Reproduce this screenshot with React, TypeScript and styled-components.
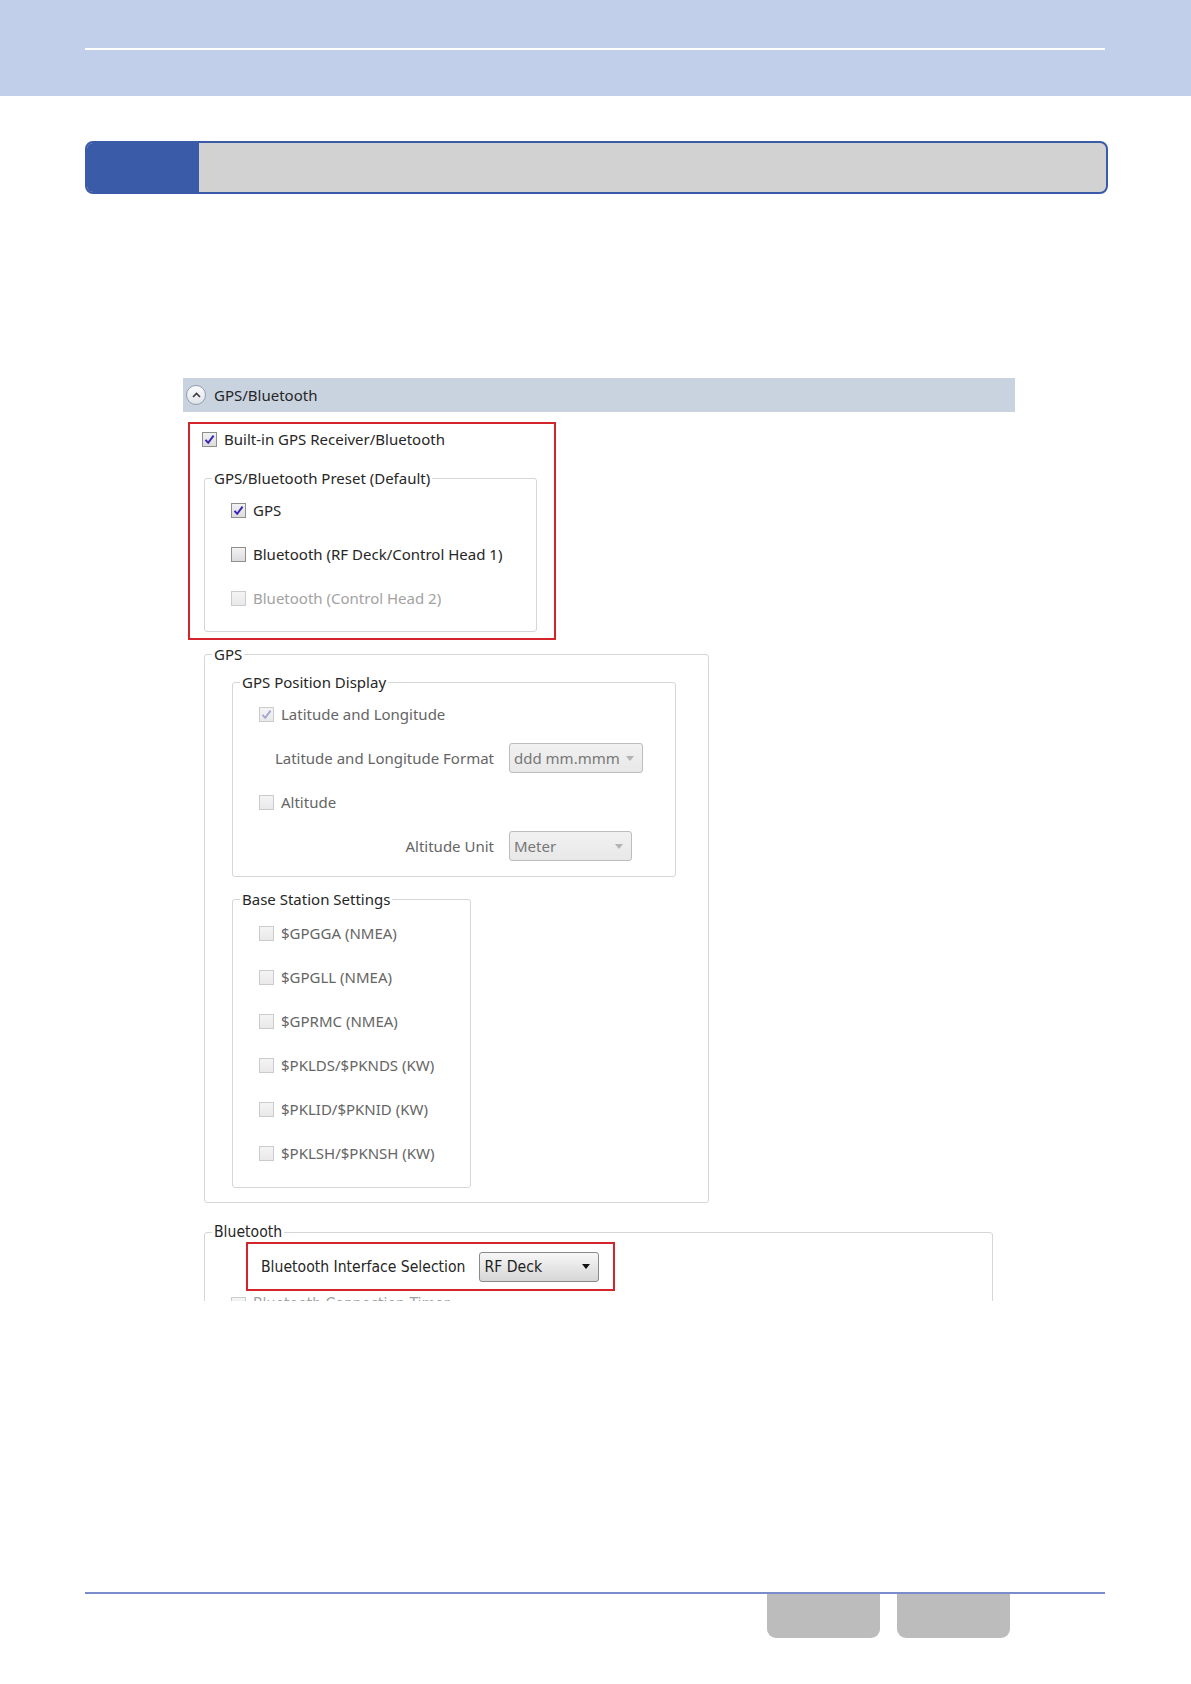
import styled, { createGlobalStyle } from "styled-components";

const GlobalStyle = createGlobalStyle`
  html, body { margin: 0; padding: 0; background: #ffffff; }
  * { box-sizing: border-box; }
`;

const Page = styled.div`
  width: 1191px;
  height: 1684px;
  display: flex;
  flex-direction: column;
  background: #fff;
  font-family: "Noto Sans", "Open Sans", sans-serif;
`;

const Header = styled.header`
  height: 96px;
  background: #c2cfeb;
  padding: 48px 86px 0 85px;
`;

const HeaderRule = styled.div`
  height: 2px;
  background: #ffffff;
`;

const TitleBar = styled.div`
  margin: 45px 0 0 85px;
  width: 1023px;
  height: 53px;
  display: flex;
  border: 2px solid #3a5ba8;
  border-radius: 8px;
  overflow: hidden;
  background: #d2d2d2;
`;

const TitleBlock = styled.div`
  width: 112px;
  background: #3a5ba8;
`;

const Shot = styled.section`
  margin: 184px 0 0 183px;
  width: 832px;
  height: 923px;
  overflow: hidden;
  color: #262626;
  font-size: 15px;
`;

const SectionHead = styled.div`
  height: 34px;
  display: flex;
  align-items: center;
  gap: 8px;
  padding-left: 3px;
  background: #c9d3e0;
`;

const CollapseIcon = styled.span`
  width: 20px;
  height: 20px;
  border-radius: 50%;
  border: 1px solid #939dab;
  background: linear-gradient(#fbfcfd, #dfe4ea);
  display: flex;
  align-items: center;
  justify-content: center;
`;

const HighlightBox = styled.div<{ $w: number; $h?: number }>`
  width: ${(p) => p.$w}px;
  ${(p) => (p.$h ? `height: ${p.$h}px;` : "")}
  border: 2px solid #d4252c;
`;

const Row = styled.div<{ $h?: number }>`
  height: ${(p) => p.$h ?? 44}px;
  display: flex;
  align-items: center;
  gap: 7px;
`;

const Label = styled.span<{ $tone?: "normal" | "muted" | "disabled" }>`
  white-space: nowrap;
  line-height: 20px;
  color: ${(p) =>
    p.$tone === "disabled" ? "#a2a2a2" : p.$tone === "muted" ? "#656565" : "#262626"};
`;

const FieldLabel = styled(Label)`
  width: 235px;
  text-align: right;
  margin-right: 8px;
`;

const Group = styled.fieldset<{ $w: number }>`
  width: ${(p) => p.$w}px;
  margin: 0;
  padding: 0;
  border: 1px solid #d6d6d6;
  border-radius: 3px;
  min-width: 0;
`;

const GroupBody = styled.div<{ $pad: string }>`
  padding: ${(p) => p.$pad};
`;

const Legend = styled.legend`
  margin-left: 7px;
  padding: 0 2px;
  line-height: 20px;
  color: #262626;
  white-space: nowrap;
`;

const Box = styled.span<{ $disabled?: boolean }>`
  width: 15px;
  height: 15px;
  flex-shrink: 0;
  display: flex;
  align-items: center;
  justify-content: center;
  border: 1px solid ${(p) => (p.$disabled ? "#cbcbcb" : "#8e8e8e")};
  background: ${(p) =>
    p.$disabled ? "linear-gradient(#f4f4f4, #e9e9e9)" : "linear-gradient(#f2f2f2, #dcdcdc)"};
`;

const Select = styled.div<{ $w: number; $active?: boolean }>`
  width: ${(p) => p.$w}px;
  height: 30px;
  display: flex;
  align-items: center;
  justify-content: space-between;
  padding: 0 8px 0 4px;
  border: 1px solid ${(p) => (p.$active ? "#8a8a8a" : "#bdbdbd")};
  border-radius: 3px;
  background: ${(p) =>
    p.$active ? "linear-gradient(#f7f7f7, #d6d6d6)" : "linear-gradient(#f1f1f1, #e8e8e8)"};
  color: ${(p) => (p.$active ? "#1f1f1f" : "#777")};
`;

const Caret = styled.span<{ $active?: boolean }>`
  width: 0;
  height: 0;
  border-left: 4px solid transparent;
  border-right: 4px solid transparent;
  border-top: 5px solid ${(p) => (p.$active ? "#111" : "#b3b3b3")};
`;

const Narrow = styled.div`
  font-family: "Liberation Sans Narrow", "DejaVu Sans Condensed", "Noto Sans", sans-serif;
  font-size: 15.6px;
`;

const SelectionRow = styled(Row)`
  padding-left: 13px;
  gap: 14px;
`;

const Footer = styled.footer`
  margin-top: auto;
  padding: 0 86px 46px 85px;
`;

const FooterRule = styled.div`
  height: 2px;
  background: #7b8bcb;
`;

const Tabs = styled.div`
  display: flex;
  gap: 17px;
  padding-left: 682px;
`;

const Tab = styled.div`
  width: 113px;
  height: 44px;
  background: #bcbcbc;
  border-radius: 0 0 9px 9px;
`;

const Body = styled.div`
  padding: 10px 0 0 5px;
`;

const Indent = styled.div<{ $l: number; $t?: number }>`
  margin-left: ${(p) => p.$l}px;
  margin-top: ${(p) => p.$t ?? 0}px;
`;

function Check({ checked, disabled }: { checked?: boolean; disabled?: boolean }) {
  return (
    <Box $disabled={disabled}>
      {checked && (
        <svg width="11" height="11" viewBox="0 0 11 11">
          <path
            d="M1.5 5.8 L4.2 8.8 L9.6 1.6"
            fill="none"
            stroke={disabled ? "#a6a8d0" : "#3526b8"}
            strokeWidth="2"
          />
        </svg>
      )}
    </Box>
  );
}

function Item({
  text,
  checked,
  tone,
  disabled,
  h,
}: {
  text: string;
  checked?: boolean;
  tone?: "normal" | "muted" | "disabled";
  disabled?: boolean;
  h?: number;
}) {
  return (
    <Row $h={h}>
      <Check checked={checked} disabled={disabled} />
      <Label $tone={tone}>{text}</Label>
    </Row>
  );
}

const baseStations = [
  "$GPGGA (NMEA)",
  "$GPGLL (NMEA)",
  "$GPRMC (NMEA)",
  "$PKLDS/$PKNDS (KW)",
  "$PKLID/$PKNID (KW)",
  "$PKLSH/$PKNSH (KW)",
];

export default function App() {
  return (
    <Page>
      <GlobalStyle />
      <Header>
        <HeaderRule />
      </Header>
      <TitleBar>
        <TitleBlock />
      </TitleBar>

      <Shot>
        <SectionHead>
          <CollapseIcon>
            <svg width="9" height="6" viewBox="0 0 9 6">
              <path d="M1 5 L4.5 1.5 L8 5" fill="none" stroke="#3a3a3a" strokeWidth="1.6" />
            </svg>
          </CollapseIcon>
          <Label>GPS/Bluetooth</Label>
        </SectionHead>

        <Body>
          <HighlightBox $w={368}>
            <Indent $l={12} $t={0}>
              <Item text="Built-in GPS Receiver/Bluetooth" checked h={30} />
            </Indent>
            <Indent $l={14} $t={14}>
              <Group $w={333}>
                <Legend>GPS/Bluetooth Preset (Default)</Legend>
                <GroupBody $pad="0 0 11px 26px">
                  <Item text="GPS" checked />
                  <Item text="Bluetooth (RF Deck/Control Head 1)" />
                  <Item text="Bluetooth (Control Head 2)" tone="disabled" disabled />
                </GroupBody>
              </Group>
            </Indent>
            <Indent $l={0} $t={6} />
          </HighlightBox>

          <Indent $l={16} $t={4}>
            <Group $w={505}>
              <Legend>GPS</Legend>
              <GroupBody $pad="8px 0 14px 27px">
                <Group $w={444}>
                  <Legend>GPS Position Display</Legend>
                  <GroupBody $pad="0 0 8px 26px">
                    <Item text="Latitude and Longitude" checked disabled tone="muted" />
                    <Row>
                      <FieldLabel $tone="muted">Latitude and Longitude Format</FieldLabel>
                      <Select $w={134}>
                        ddd mm.mmm
                        <Caret />
                      </Select>
                    </Row>
                    <Item text="Altitude" disabled tone="muted" />
                    <Row>
                      <FieldLabel $tone="muted">Altitude Unit</FieldLabel>
                      <Select $w={123}>
                        Meter
                        <Caret />
                      </Select>
                    </Row>
                  </GroupBody>
                </Group>
                <Indent $l={0} $t={12}>
                  <Group $w={239}>
                    <Legend>Base Station Settings</Legend>
                    <GroupBody $pad="2px 0 12px 26px">
                      {baseStations.map((s) => (
                        <Item key={s} text={s} disabled tone="muted" />
                      ))}
                    </GroupBody>
                  </Group>
                </Indent>
              </GroupBody>
            </Group>
          </Indent>

          <Indent $l={16} $t={19}>
            <Narrow>
              <Group $w={789}>
                <Legend>Bluetooth</Legend>
                <GroupBody $pad="0 0 0 41px">
                  <HighlightBox $w={369} $h={49}>
                    <SelectionRow $h={45}>
                      <Label>Bluetooth Interface Selection</Label>
                      <Select $w={120} $active>
                        RF Deck
                        <Caret $active />
                      </Select>
                    </SelectionRow>
                  </HighlightBox>
                  <Indent $l={-15} $t={5}>
                    <Item text="Bluetooth Connection Timer" tone="disabled" disabled h={16} />
                  </Indent>
                </GroupBody>
              </Group>
            </Narrow>
          </Indent>
        </Body>
      </Shot>

      <Footer>
        <FooterRule />
        <Tabs>
          <Tab />
          <Tab />
        </Tabs>
      </Footer>
    </Page>
  );
}
